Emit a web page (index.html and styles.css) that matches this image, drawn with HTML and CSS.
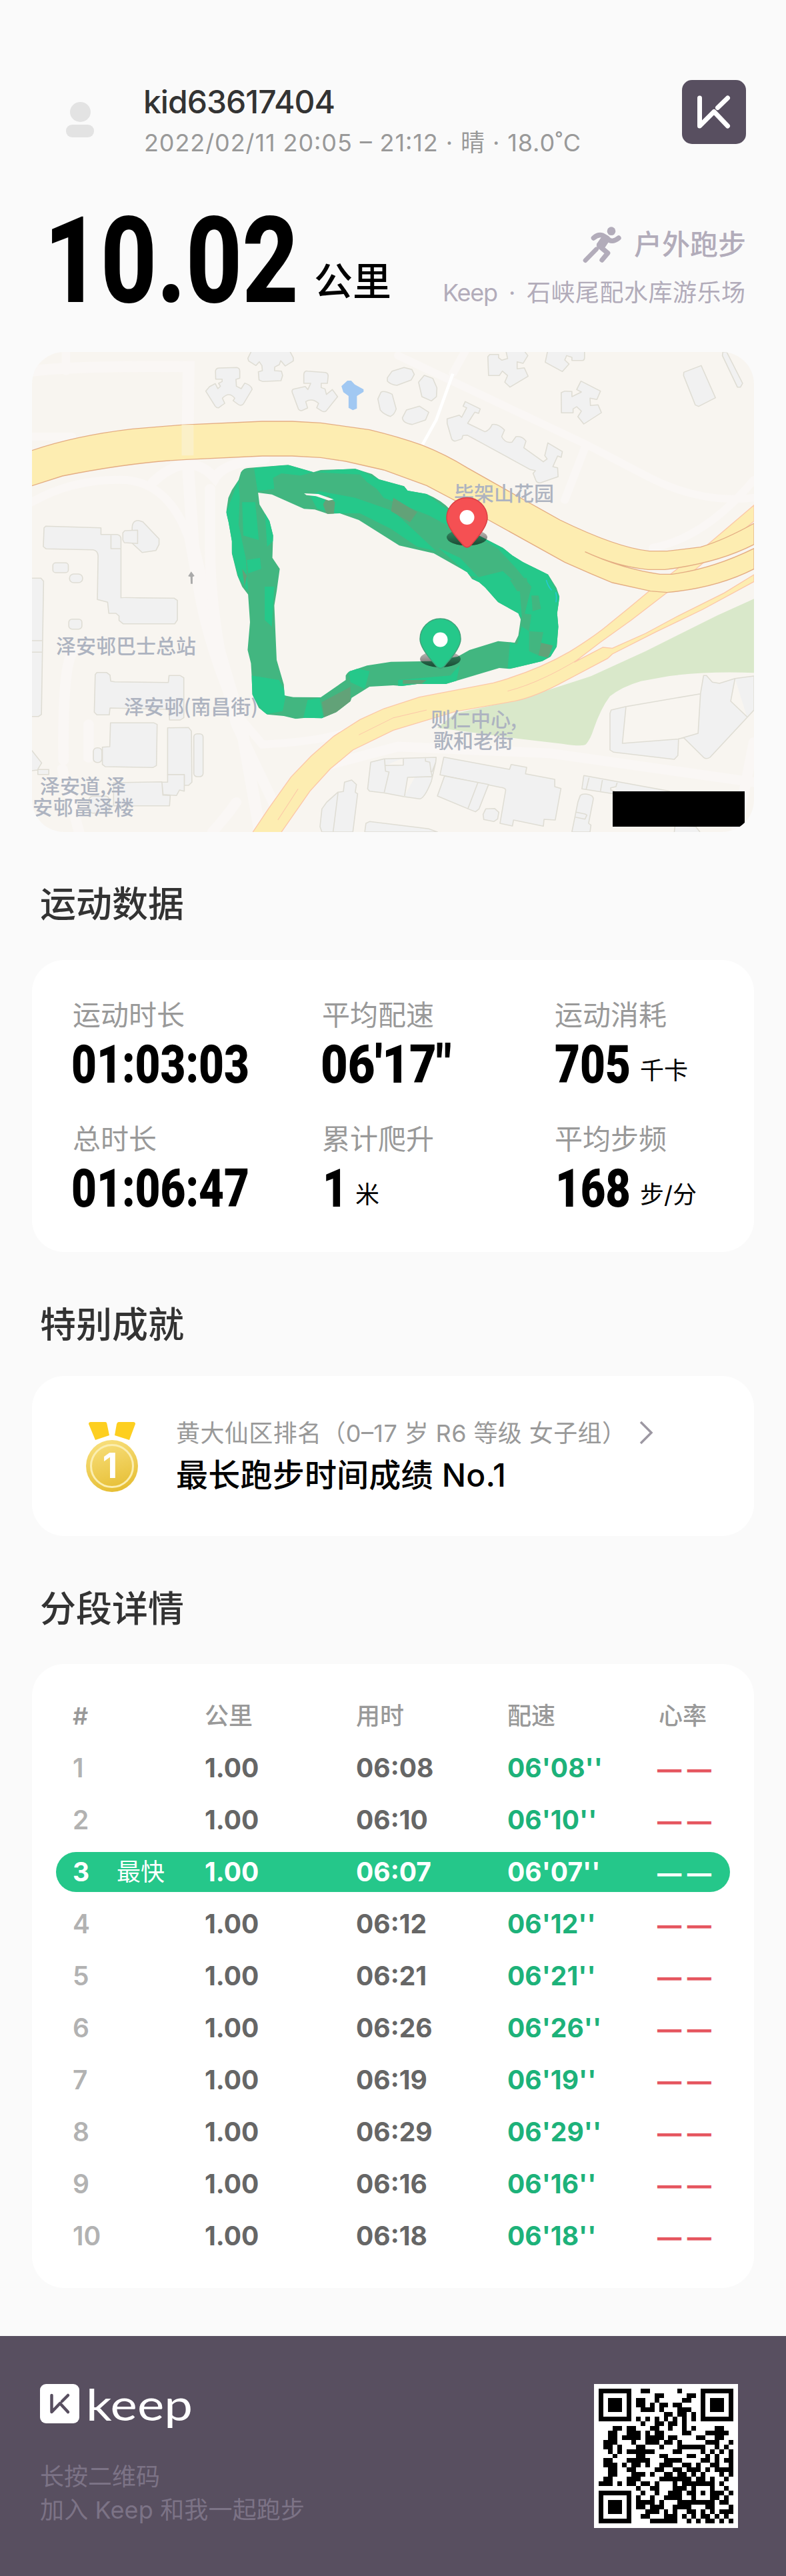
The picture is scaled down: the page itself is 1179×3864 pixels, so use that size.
FILE: index.html
```html
<!DOCTYPE html>
<html lang="zh-CN">
<head>
<meta charset="utf-8">
<title>Keep 户外跑步</title>
<link rel="stylesheet" href="styles.css">
</head>
<body>
<header class="profile">
  <svg class="avatar" viewBox="0 0 96 96"><ellipse cx="48.5" cy="36" rx="15.5" ry="15"/><rect x="27" y="55" width="42" height="19" rx="9"/></svg>
  <div class="who">
    <div class="name"><svg width="290" height="58"><text x="-2" y="47" textLength="288">kid63617404</text></svg></div>
    <div class="date"><svg width="660" height="46"><text x="-1" y="36" textLength="655">2022/02/11 20:05 – 21:12 · 晴 · 18.0˚C</text></svg></div>
  </div>
  <svg class="app-logo" viewBox="0 0 96 96"><rect width="96" height="96" rx="15"/><path d="M26.5 27V69L48 47.500L68.500 69M68.500 27L53.500 41.500"/></svg>
</header>

<section class="summary">
  <div class="distance">
    <svg class="din" width="368" height="130"><text x="-13" y="130" font-size="180" textLength="382" lengthAdjust="spacingAndGlyphs">10.02</text></svg>
    <span>公里</span>
  </div>
  <div class="activity">
    <div class="kind">
      <svg width="60" height="56" viewBox="0 0 180 168"><circle cx="132" cy="23" r="19"/><path class="limb" d="M52 54Q72 36 92 42L113 54Q132 80 165 54" /><path d="M83 38L124 66L104 96L84 104Q62 98 66 80L86 52Z"/><path class="limb" d="M80 92L116 122L90 153"/><path class="leg" d="M65 104L15 155"/></svg>
      <span>户外跑步</span>
    </div>
    <div class="place"><svg width="454" height="36"><text x="-1" y="32" textLength="83">Keep</text><text x="98" y="32">·</text><text x="125" y="32" textLength="328">石峡尾配水库游乐场</text></svg></div>
  </div>
</section>

<section class="map">
  <svg class="terrain" viewBox="22.4 24 3032.4 2160" preserveAspectRatio="none">
    <g class="lane">
      <path d="M20 110Q200 85 680 90L675 500L700 900L790 1300L900 1700L980 2184" stroke-width="50"/>
      <path d="M165 24V110M20 405H190M20 700Q200 590 420 600Q600 620 680 860L720 1100Q760 1350 880 1650L990 1790Q1200 1780 1330 1740" stroke-width="36"/>
      <path d="M530 610Q680 460 790 590Q830 520 1000 505M770 640V900Q770 1250 880 1700L1040 2060L1200 1900L1560 1800L2200 1830L3054 1960" stroke-width="44"/>
      <path d="M1560 40L2350 440L2600 580Q2830 710 3054 680M2350 440L2260 690M2630 905Q2850 860 3054 600M1840 24L1790 120" stroke-width="34"/>
      <path d="M3054 1780L2980 2184M780 2184Q850 2100 880 2050M200 1370Q150 1400 155 1860M260 1700V1850M150 1900L220 2184" stroke-width="44"/>
      <path d="M2000 690L2180 800" class="white" stroke-width="24"/>
      <path class="white" d="M1790 122L1720 330L1655 455" stroke-width="13"/>
    </g>
    <path class="park" d="M3055 1135L2900 1210L2600 1370L2370 1483L2060 1590L1800 1650L1725 1715L1900 1740L2070 1765L2250 1787Q2340 1802 2350 1788Q2368 1765 2380 1725Q2410 1630 2450 1573Q2500 1530 2580 1505L2700 1482Q2860 1460 3055 1468Z"/>
    <path class="pond" d="M1347 153H1363L1378 170L1415 192V203L1387 222V278L1370 286L1352 275V222L1330 205L1322 178Z"/>
    <g class="building">
      <path d="M793 110Q795 95 812 96L882 94Q895 97 895 110V142L879 147L881 178L901 189L916 164Q945 175 947 192L910 258Q900 268 890 261L867 243L874 232Q850 200 822 232L832 255L806 275Q798 276 792 268L752 200L768 180L792 166L803 189L814 178L806 165L821 157V146H794Z"/>
      <path d="M944 20L929 52L932 64L963 85L977 68L988 85L990 108L973 113L976 150L992 157L1068 153L1075 130L1070 110L1041 108L1042 91L1061 81L1067 63L1086 87L1120 64L1120 50L1105 20Z"/>
      <path d="M1164 125Q1165 108 1180 110L1255 116Q1268 120 1266 135L1263 165H1237V184L1253 190L1259 215L1284 193L1306 225L1258 289Q1250 296 1240 290L1218 275L1226 255Q1200 230 1172 247L1180 276L1155 288Q1145 288 1141 280L1115 205Q1113 195 1120 191L1170 179L1181 193L1193 165H1164Z"/>
      <path d="M1475 235L1488 205Q1500 196 1535 214L1552 280Q1545 305 1528 314Q1500 305 1485 285Z"/><path d="M1515 140L1535 110L1585 94L1618 103L1628 125L1615 150L1555 174Q1528 170 1515 155Z"/>
      <path d="M1646 160L1670 129L1706 143L1723 185L1721 225L1700 244L1660 225Z"/><path d="M1578 320L1595 285L1650 268L1689 295L1675 330L1620 350Q1580 345 1578 320Z"/>
      <path d="M1937 45L1945 35H1982V50L1996 61L2020 53L2013 20H2090L2105 40L2085 75L2060 68V100L2090 95L2106 133L2030 182L2008 160L2020 130L1998 110L1985 130H1940Z"/>
      <path d="M2185 35L2178 70L2250 112L2278 78L2260 60L2268 40L2290 48V62H2335Q2343 60 2343 50V20H2188Z"/>
      <path d="M2245 207L2260 200L2290 202V225L2330 204L2310 193L2328 155L2410 200L2395 238L2366 232L2368 265L2400 262L2414 297L2340 348L2315 315L2330 290L2310 270L2295 280V298H2246Z"/>
      <path d="M1766 325L1817 308L1827 318L1848 275L1833 268L1842 247L1905 280L1898 300L1882 295L1852 345L1925 383Q1945 375 1955 350Q1980 345 2007 375L1995 405Q2010 435 2038 430L2055 405Q2080 400 2097 425L2088 455L2170 518L2186 505L2176 490L2189 433L2250 472L2245 498L2230 492L2210 540L2230 545L2232 585L2160 612Q2145 615 2140 605L2127 570L2137 558L2115 553L1850 398L1832 400L1828 415L1800 425Q1790 425 1785 415L1766 345Z"/>
      <path d="M2760 115L2833 85L2893 230L2822 269L2808 262L2759 130Z"/><path d="M2924 24L2940 24L3007 165L2998 182H2985L2922 40Z"/>
      <path d="M73 815L80 808L312 815V845H380Q396 848 396 865V1130Q398 1128 470 1130L620 1132L633 1142V1230L622 1247H405L388 1232V1212L375 1200H345L340 1150L297 1138L300 940Q298 918 280 914L82 910L70 900Z"/><path d="M354 848V909H396"/>
      <path d="M443 825Q441 780 470 782L488 788L556 865V890L543 917L485 926L443 884Z"/><path d="M412 828L466 826V886L410 882L404 870V838Z"/>
      <rect x="110" y="973" width="65" height="44" rx="12"/><rect x="180" y="1023" width="55" height="39" rx="18"/><path d="M20 1042H60L71 1055L62 1655L50 1664H20ZM20 1323H65M20 1375H65"/><rect x="177" y="1226" width="55" height="45" rx="14"/>
      <path d="M288 1475L295 1466H335L350 1478L353 1505L370 1508L595 1511L598 1480H645L660 1490V1670L645 1680H600L597 1632L350 1626L347 1657H295L284 1645Z"/><path d="M352 1693H535L548 1700L545 1885L530 1894L330 1890L318 1880V1802L349 1800Z"/><rect x="280" y="1805" width="36" height="66" rx="16"/>
      <path d="M592 1715L680 1714L692 1730L694 1960L680 1974H662V1925H592Z"/><rect x="702" y="1742" width="39" height="193" rx="14"/><path d="M365 1962L568 1958L572 2018L603 2020L600 2066H365ZM592 1926H662V2000L642 1995L629 2020L573 2015L568 1960H592Z"/><path d="M20 1815L63 1873L45 1905L20 1908ZM47 1903H93V1925H47Z"/><rect x="262" y="2023" width="85" height="76" rx="16"/>
      <path d="M1445 1870L1502 1855L1720 1848L1718 1870L1700 1955Q1670 2035 1650 2035L1585 2025L1500 2008L1440 2000L1432 1990ZM1503 1855L1507 1910L1522 1914L1502 2005M1507 1885L1582 1883V1850M1675 1850V1865L1693 1870L1698 1910L1703 1935L1600 1938L1587 2022M1600 1938L1704 1934M1718 1870L1703 1912H1695"/>
      <path d="M1752 1847L2028 1902L2035 1880L2100 1893L2095 1922L2218 1947V1980L2244 1988L2220 2130L2173 2127L2170 2158L2045 2130L2040 2157L1988 2145L2012 1995Q2010 1985 1990 1983L1736 1927Z"/><path d="M1755 1932L1940 1970L1900 2080L1885 2093L1855 2080L1725 2022ZM1895 1962L1853 2080"/><path d="M1330 2002L1335 1960L1365 1950L1385 1970L1380 2005L1390 2012L1370 2184H1240L1232 2160L1240 2080L1260 2050L1307 2005ZM1308 2005L1287 2184"/><path d="M1420 2184L1425 2145L1440 2137L1690 2170L1725 2184Z"/><path d="M1928 2080L1965 2078L1983 2095L1978 2125L1962 2137L1920 2128L1917 2105Z"/>
      <path d="M2340 1930L2700 2000V2030L2470 2013L2332 1990ZM2362 1940L2350 1992M2418 1950L2410 2000M2480 1962L2475 1980L2453 1985V1995L2470 2000"/><path d="M2325 2020Q2335 2010 2360 2015Q2380 2020 2380 2035L2360 2145L2370 2153L2366 2184H2290L2315 2050ZM2308 2095L2345 2103L2353 2108L2345 2126L2305 2117"/>
      <path d="M2455 1635L2515 1620L2830 1562L2843 1480L2855 1480L2880 1510L2910 1515L2975 1493L3055 1482V1635L2870 1848Q2855 1858 2845 1850L2760 1760L2738 1765L2735 1840L2720 1857L2465 1825L2450 1815V1650ZM2517 1620L2502 1785L2740 1765L2820 1740L2830 1562M2975 1493L2957 1595L3025 1665"/><path d="M2720 2184L2723 2155L2810 2160L2828 2184"/>
    </g>
    <path class="ramp" d="M950 2184L1015 2080L1110 1937L1195 1842L1290 1753L1400 1678L1500 1629L1650 1577L1960 1513Q2140 1460 2280 1373Q2390 1300 2450 1245L2530 1175L2620 1095L2850 900L3055 713V785L2830 983L2700 1098L2540 1230L2410 1330L2300 1420L2420 1353L2460 1357L2600 1290L2730 1215L2930 1108L3055 1026V1057L2840 1182L2640 1285L2460 1383L2440 1403L2260 1505Q2140 1575 2050 1595L1800 1642L1540 1726L1370 1815L1275 1900L1190 2000L1070 2184"/>
    <path class="ramp line" d="M2320 1405Q2150 1515 2020 1550M1680 1635L1540 1670L1395 1747M1140 1990L1055 2130"/>
    <path class="road" d="M22 467Q205 400 445 370L650 352L990 336H1115L1235 343L1440 374Q1560 405 1660 443Q1760 485 1850 545L2090 690L2240 780Q2480 905 2615 920H2690L2830 902Q2930 870 3055 795V890Q2900 975 2680 1003H2610Q2480 990 2345 923Q2500 1000 2660 1024H2710Q2880 1000 3055 908V1000Q2900 1085 2690 1106L2620 1100L2460 1062L2370 1022L2260 970L1940 780L1800 693L1680 625L1500 555L1340 516L1235 499L1115 492H990L670 508Q440 520 150 582L22 626"/>
    <path class="crossing" d="M676 352V490"/>
    <path class="arrow" d="M691 1012L678 1033L688 1036L689 1067H697V1036L705 1032Z"/>
  </svg>
  <svg class="labels" viewBox="0 0 1083 720">
    <text x="633" y="223">毕架山花园</text><text x="36" y="452">泽安邨巴士总站</text><text x="138" y="543" textLength="201">泽安邨(南昌街)</text>
    <text x="12" y="662" textLength="129">泽安道,泽</text><text x="1" y="694" textLength="152">安邨富泽楼</text><text x="598" y="562">则仁中心,</text><text x="602" y="594">歌和老街</text>
  </svg>
  <svg class="terrain" viewBox="22.4 24 3032.4 2160" preserveAspectRatio="none">
    <defs><clipPath id="track"><path id="route" clip-rule="evenodd" d="M890 600L900 565Q912 546 930 546L1098 532L1205 565L1235 555L1380 550L1450 573L1480 597L1585 628L1600 648L1680 663Q1760 700 1790 750L1900 850L2000 905L2040 940L2085 970L2190 1025L2225 1085L2238 1125L2228 1200L2233 1260L2226 1350L2200 1395L2165 1415L2030 1450L1985 1446L1760 1518L1640 1518L1575 1527L1540 1524L1440 1530L1365 1580L1360 1595L1300 1645L1240 1672L1170 1670L1130 1675L1080 1662L1010 1655L975 1625L948 1565L945 1480L942 1425L928 1365L938 1240L930 1115L905 1080L885 1030L862 930V875L848 790L838 745L847 680L862 645ZM972 657L978 710L1020 785L1035 850L1032 950L1063 1000L1050 1100L1040 1165L1050 1410L1080 1520L1083 1570L1120 1577L1235 1578L1340 1500V1480Q1350 1460 1365 1458L1430 1435L1530 1418L1700 1415L1810 1395L1860 1365L1980 1325L2050 1332L2065 1300L2075 1228L2065 1200L1980 1150L1925 1083L1900 1060L1870 1045L1850 1015L1710 930L1565 895L1395 780L1315 750L1265 752L1210 733L1165 730L1030 665Z"/></clipPath></defs>
    <g clip-path="url(#track)">
      <rect class="slow" x="800" y="500" width="1500" height="1250"/>
      <path class="fast" d="M955 546L1098 532L1205 565L1150 580L1070 570L1035 590L1040 640L970 650ZM1205 565L1380 545L1480 597L1585 628L1680 663L1790 750L1830 850L1760 800L1690 760L1620 730L1500 680L1470 640L1430 610L1400 575ZM1230 650L1380 680L1540 740L1640 840L1720 920L1640 900L1530 820L1400 750L1300 750L1220 730L1190 670ZM890 600L838 745L862 930L890 1040L930 1100L920 950L890 800L895 680ZM905 700L960 700L975 870L910 850ZM925 960L980 950L985 1000L930 1020ZM1000 730L1060 850L1010 900ZM1000 1080L1040 1080L1030 1260L1000 1230ZM945 1480L1060 1500L1090 1560L1075 1640L1000 1655L940 1560ZM1180 1590L1230 1580L1250 1690L1160 1680ZM1350 1440L1440 1460L1420 1540L1360 1510ZM1860 830L2000 905L2190 1025L2240 1130L2230 1420L2020 1450L2030 1330L2060 1340L2120 1080L2050 990L1980 910ZM1870 1045L2000 1010L2070 1080L2080 1220L1980 1150ZM1730 905L1820 950L1900 1040L1860 1030ZM1560 1500L1780 1480L1820 1430L1800 1530L1560 1540Z"/>
      <path class="warm" d="M1265 670L1295 700L1290 755H1260L1245 710ZM1540 680L1640 745L1610 790L1530 740ZM1240 1600L1360 1530V1620L1250 1670ZM2150 1330L2210 1345L2190 1400L2150 1390ZM1580 1500H1680L1660 1517H1580ZM905 1000L925 1030L915 1080Z"/>
      <path class="slow" d="M2120 1120H2150L2160 1180L2125 1190ZM2080 1200L2120 1205L2110 1280L2080 1260ZM2110 1280L2170 1285L2150 1390L2110 1370ZM2030 1050L2100 1040L2110 1100H2060Z"/>
    </g>
    <path class="gap" d="M1165 660L1225 663L1290 688L1268 692L1215 673L1175 668Z"/>
    <path class="hint" d="M2182 1050Q2190 1080 2205 1096M2222 1105Q2227 1125 2223 1150"/>
  </svg>
  <svg class="labels" viewBox="0 0 1083 720">
    <defs><linearGradient id="shade" x1="0" x2="0" y1="0" y2="1"><stop offset="0" stop-opacity=".2"/><stop offset="1" stop-opacity=".6"/></linearGradient></defs>
    <g transform="translate(652.500 293)"><ellipse cx="0" cy="-15" rx="30.500" ry="12.500" fill="url(#shade)"/><path class="pin red" d="M0 0Q-4 0 -9 -7Q-30.500 -31 -30.500 -44A30.500 30.500 0 0 1 30.500 -44Q30.500 -31 9 -7Q4 0 0 0Z"/><circle cy="-45" r="11" fill="#fff"/></g>
    <g transform="translate(612.500 474.500)"><ellipse cx="0" cy="-14" rx="30.500" ry="12.500" fill="url(#shade)"/><path class="pin green" d="M0 0Q-4 0 -9 -7Q-30.500 -31 -30.500 -44A30.500 30.500 0 0 1 30.500 -44Q30.500 -31 9 -7Q4 0 0 0Z"/><circle cy="-43" r="11" fill="#fff"/></g>
    <path d="M871 659H1069V707L1063 712H871Z"/>
  </svg>
</section>

<h2>运动数据</h2>
<section class="card stats">
  <div><p>运动时长</p><div class="value"><svg class="din" width="264" height="57"><text x="-3" y="57" font-size="79" textLength="267" lengthAdjust="spacingAndGlyphs">01:03:03</text></svg></div></div>
  <div><p>平均配速</p><div class="value"><svg class="din" width="192" height="57"><text x="-3" y="57" font-size="79" textLength="196" lengthAdjust="spacingAndGlyphs">06'17"</text></svg></div></div>
  <div><p>运动消耗</p><div class="value"><svg class="din" width="113" height="57"><text x="-1" y="57" font-size="79" textLength="114" lengthAdjust="spacingAndGlyphs">705</text></svg><span>千卡</span></div></div>
  <div><p>总时长</p><div class="value"><svg class="din" width="264" height="57"><text x="-3" y="57" font-size="79" textLength="267" lengthAdjust="spacingAndGlyphs">01:06:47</text></svg></div></div>
  <div><p>累计爬升</p><div class="value"><svg class="din" width="35" height="57"><text x="0" y="57" font-size="79" textLength="37" lengthAdjust="spacingAndGlyphs">1</text></svg><span>米</span></div></div>
  <div><p>平均步频</p><div class="value"><svg class="din" width="113" height="57"><text x="0" y="57" font-size="79" textLength="113" lengthAdjust="spacingAndGlyphs">168</text></svg><span>步/分</span></div></div>
</section>

<h2 class="h-award">特别成就</h2>
<section class="card award">
  <svg class="medal" width="78" height="106" viewBox="0 0 78 106">
    <defs><linearGradient id="gold" x1=".3" y1="0" x2=".6" y2="1"><stop offset="0" stop-color="#f8df7c"/><stop offset="1" stop-color="#e6be33"/></linearGradient></defs>
    <path fill="#fdcf20" d="M7 0H29Q31 0 31.500 3L35 20L14 27L4 3Q4 0 7 0ZM49 0H71Q74 0 74 3L65 27L43 20L46 3Q47 0 49 0Z"/>
    <circle cx="39" cy="66" r="44" fill="#fff"/><circle cx="39" cy="66" r="39" fill="url(#gold)"/><circle cx="39" cy="66" r="31.500" fill="none" stroke="#fbeeb0" stroke-width="3"/>
    <text x="36" y="84" text-anchor="middle">1</text>
  </svg>
  <div>
    <div class="rank"><svg width="670" height="36"><text x="-1" y="32" textLength="675">黄大仙区排名（0–17 岁 R6 等级 女子组）</text></svg><svg class="chevron" width="22" height="34"><path d="M2 1L18 17L2 33"/></svg></div>
    <div class="result"><svg width="500" height="54"><text x="-1" y="44" textLength="495">最长跑步时间成绩 No.1</text></svg></div>
  </div>
</section>

<h2 class="h-splits">分段详情</h2>
<section class="card splits">
  <div class="row head"><b>#</b><i></i><span>公里</span><span>用时</span><span>配速</span><span>心率</span></div>
  <div class="row"><b>1</b><i></i><span>1.00</span><span>06:08</span><em>06'08''</em><svg width="80" height="60"><text x="-2" y="46" textLength="81" lengthAdjust="spacingAndGlyphs">— —</text></svg></div>
  <div class="row"><b>2</b><i></i><span>1.00</span><span>06:10</span><em>06'10''</em><svg width="80" height="60"><text x="-2" y="46" textLength="81" lengthAdjust="spacingAndGlyphs">— —</text></svg></div>
  <div class="row best"><b>3</b><i>最快</i><span>1.00</span><span>06:07</span><em>06'07''</em><svg width="80" height="60"><text x="-2" y="46" textLength="81" lengthAdjust="spacingAndGlyphs">— —</text></svg></div>
  <div class="row"><b>4</b><i></i><span>1.00</span><span>06:12</span><em>06'12''</em><svg width="80" height="60"><text x="-2" y="46" textLength="81" lengthAdjust="spacingAndGlyphs">— —</text></svg></div>
  <div class="row"><b>5</b><i></i><span>1.00</span><span>06:21</span><em>06'21''</em><svg width="80" height="60"><text x="-2" y="46" textLength="81" lengthAdjust="spacingAndGlyphs">— —</text></svg></div>
  <div class="row"><b>6</b><i></i><span>1.00</span><span>06:26</span><em>06'26''</em><svg width="80" height="60"><text x="-2" y="46" textLength="81" lengthAdjust="spacingAndGlyphs">— —</text></svg></div>
  <div class="row"><b>7</b><i></i><span>1.00</span><span>06:19</span><em>06'19''</em><svg width="80" height="60"><text x="-2" y="46" textLength="81" lengthAdjust="spacingAndGlyphs">— —</text></svg></div>
  <div class="row"><b>8</b><i></i><span>1.00</span><span>06:29</span><em>06'29''</em><svg width="80" height="60"><text x="-2" y="46" textLength="81" lengthAdjust="spacingAndGlyphs">— —</text></svg></div>
  <div class="row"><b>9</b><i></i><span>1.00</span><span>06:16</span><em>06'16''</em><svg width="80" height="60"><text x="-2" y="46" textLength="81" lengthAdjust="spacingAndGlyphs">— —</text></svg></div>
  <div class="row"><b>10</b><i></i><span>1.00</span><span>06:18</span><em>06'18''</em><svg width="80" height="60"><text x="-2" y="46" textLength="81" lengthAdjust="spacingAndGlyphs">— —</text></svg></div>
</section>

<footer>
  <div>
    <div class="brand">
      <svg width="59" height="59" viewBox="0 0 59 59"><rect width="59" height="59" rx="9" fill="#fff"/><path class="mark" d="M17.500 17V42L30 29L42 42M42 17L33 26"/></svg>
      <svg width="160" height="72"><text x="-2" y="55" textLength="160" lengthAdjust="spacingAndGlyphs">keep</text></svg>
    </div>
    <p>长按二维码</p>
    <p><svg width="400" height="50"><text x="0" y="39" textLength="397">加入 Keep 和我一起跑步</text></svg></p>
  </div>
  <svg id="qr" class="qr" viewBox="-1 -1 31 31" shape-rendering="crispEdges"></svg>
</footer>
<script src="qr.js"></script>
</body>
</html>
```
FILE: styles.css
```css
* { box-sizing: border-box; margin: 0; padding: 0; }
body { width: 1179px; height: 3864px; background: #fafafa; color: #000; font-family: Inter, "Noto Sans CJK SC", sans-serif; overflow: hidden; }
svg { display: block; flex: none; overflow: visible; }

.profile { display: flex; align-items: flex-start; padding: 120px 60px 0 72px; height: 216px; }
.avatar { width: 96px; height: 96px; margin-top: 12px; fill: #e3e3e3; }
.who { margin: 3px 0 0 49px; flex: 1; }
.name { font-size: 48px; font-weight: 500; fill: #333; height: 58px; }
.date { font-size: 36px; fill: #999; height: 46px; margin-top: 10px; }
.app-logo { width: 96px; height: 96px; fill: #584f60; }
.app-logo path, .mark { fill: none; stroke: #fff; stroke-width: 7; stroke-linecap: round; stroke-linejoin: round; }

.din { font-family: Roboto, sans-serif; font-weight: 800; }
.summary { display: flex; justify-content: space-between; align-items: flex-end; margin-top: 107px; padding: 0 60px 0 79px; height: 133px; }
.distance { display: flex; align-items: flex-end; gap: 24px; margin-bottom: 3px; }
.distance span { font-size: 58px; line-height: 58px; font-weight: 500; margin-bottom: 2px; }
.activity { display: flex; flex-direction: column; align-items: flex-end; gap: 26px; color: #b2acba; fill: #b2acba; }
.kind { display: flex; align-items: center; gap: 18px; height: 54px; font-size: 42px; line-height: 54px; font-weight: 500; }
.limb, .leg { fill: none; stroke: #b2acba; stroke-width: 22; stroke-linecap: round; stroke-linejoin: round; }
.leg { stroke-width: 20; }
.place { height: 36px; font-size: 36px; }

.map { position: relative; width: 1083px; height: 720px; margin: 72px 48px 0; border-radius: 48px; overflow: hidden; background: #f8f5f0; }
.map svg { position: absolute; inset: 0; width: 1083px; height: 720px; }
.lane path { fill: none; stroke: #faf7f5; stroke-linecap: round; }
.lane .white { stroke: #fff; stroke-linecap: butt; }
.park { fill: #d9e8ca; }
.pond { fill: #a1c8f2; }
.building > * { fill: #f1f1f1; stroke: #dfddd4; stroke-width: 4.500; stroke-linejoin: round; }
.road, .ramp { fill: #fdedb1; stroke: #e4ad83; stroke-width: 4; }
.ramp { stroke: #fcc8a8; }
.ramp.line { fill: none; stroke-width: 3; }
.crossing { stroke: #fbf0c8; stroke-width: 50; }
.arrow { fill: #aaa; }
.labels text { font-size: 30px; font-weight: 500; fill: #adb3c0; font-family: "Noto Sans CJK SC", sans-serif; }
.slow { fill: #42b680; }
.fast { fill: #25c88a; }
.warm { fill: #62a278; }
.gap { fill: #f8f5f0; }
.hint { fill: none; stroke: #27c8d8; stroke-width: 4; }
.pin { stroke-width: 1.500; }
.pin.red { fill: #f55053; stroke: #d93f44; }
.pin.green { fill: #25c88a; stroke: #3fa37a; }

h2 { height: 54px; margin: 82px 0 56px 60px; font-size: 54px; line-height: 54px; font-weight: 500; color: #333; }
.h-award { margin: 83px 0 49px 60px; }
.h-splits { margin: 83px 0 55px 60px; }
.card { width: 1083px; margin: 0 48px; border-radius: 48px; background: #fff; }

.stats { display: grid; grid-template-columns: 374px 349px 1fr; grid-auto-rows: 186px; height: 438px; padding: 62px 0 0 61px; }
.stats p { font-size: 42px; line-height: 42px; color: #999; }
.value { display: flex; align-items: flex-end; gap: 14px; margin-top: 23px; padding-left: 1px; }
.value span { font-size: 36px; line-height: 36px; }
.stats .din { font-weight: 900; }

.award { display: flex; height: 240px; padding: 69px 0 0 81px; gap: 58px; }
.medal text { font: 700 52px Inter, sans-serif; fill: #fff; }
.rank { display: flex; gap: 24px; height: 36px; font-size: 36px; fill: #999; margin-top: -2px; }
.chevron { margin-top: 1px; fill: none; stroke: #9d98a3; stroke-width: 3.500; }
.result { height: 54px; margin-top: 19px; font-size: 48px; font-weight: 500; }

.splits { height: 936px; padding: 48px 36px; display: flex; flex-direction: column; gap: 18px; }
.row { display: grid; grid-template-columns: 66px 132px 227px 227px 227px 1fr; height: 60px; line-height: 60px; padding-left: 25px; border-radius: 30px; font-size: 39px; font-weight: 650; color: #666; white-space: nowrap; }
.row b { color: #b2b2b2; font-weight: 600; }
.row i { font-style: normal; font-weight: 400; font-size: 36px; }
.row em { font-style: normal; color: #1db27a; }
.row svg { fill: #e5565f; }
.row.head, .row.head b { color: #999; font-weight: 500; font-size: 36px; }
.row.head b { font-weight: 600; }
.row.best { background: #25c78a; }
.row.best > * { color: #fff; fill: #fff; }
.row.best b { font-weight: 700; }

footer { display: flex; justify-content: space-between; align-items: flex-start; height: 360px; margin-top: 72px; padding: 72px 72px 0 60px; background: #584f60; color: #7c7386; fill: #7c7386; font-size: 36px; }
footer p { height: 50px; line-height: 52px; }
.brand { display: flex; gap: 12px; height: 113px; }
.brand text { font: 400 65px Lato, sans-serif; fill: #fff; }
.mark { stroke: #584f60; stroke-width: 4.500; }
.qr { width: 216px; height: 216px; background: #fff; }
```
FILE: qr.js
```js
// Dark modules of each row; the three finder squares are included.
const rows = [
  "1111111001100000010000 1111111",
  "1000001000001100000110 1000001",
  "1011101011001000001100 1011101",
  "1011101011010110110000 1011101",
  "1011101001110100011100 1011101",
  "1000001000000011011010 1000001",
  "1111111010101010101010 1111111",
  "0000000001001101101000 0000000",
  "0001101100011001001010 0001100",
  "0011001110101100001100 0111110",
  "0011011110111101100001 1001100",
  "0111000100111011010000 0111001",
  "0110100011000100011111 1001010",
  "0010101111110000110000 1010101",
  "0001000011000110000110 0101001",
  "0110001111100011110000 1101011",
  "0111010110100111001101 0011001",
  "0011001100001100110111 0101111",
  "0011000111010011011010 1000101",
  "0110001110000111111101 1010010",
  "1110101101101000101111 1110100",
  "0000000010011000111010 0010010",
  "1111111001001001110110 1011101",
  "1000001010010011110010 0011010",
  "1011101011110100011111 1110110",
  "1011101011011100111100 0110001",
  "1011101000111010100110 1010111",
  "1000001001100011101010 1101010",
  "1111111000011111100101 0110101"
];
let d = "";
rows.forEach((row, y) => {
  [...row.replace(" ", "")].forEach((m, x) => {
    if (m === "1") d += `M${x} ${y}h1v1h-1z`;
  });
});
const path = document.createElementNS("http://www.w3.org/2000/svg", "path");
path.setAttribute("d", d);
path.setAttribute("fill", "#000");
document.getElementById("qr").append(path);
```
